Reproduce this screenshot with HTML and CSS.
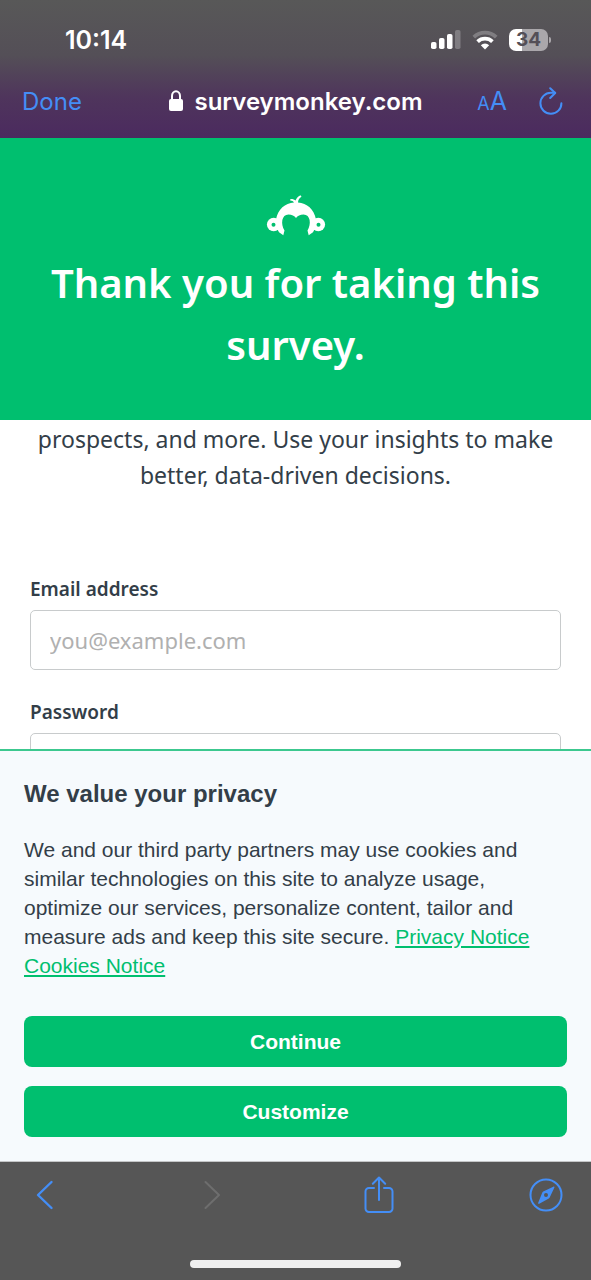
FILE: index.html
```
<!DOCTYPE html>
<html lang="en">
<head>
    <meta charset="utf-8">
    <meta name="viewport" content="width=device-width, initial-scale=1">
    <title>SurveyMonkey</title>
    <link rel="stylesheet" href="styles.css">
</head>
<body>
    <header class="browser-top">
        <div class="status-bar">
            <span class="clock">10:14</span>
            <div class="status-icons">
                <svg width="30" height="20" viewBox="0 0 30 20" fill="#fff">
                    <rect x="0" y="12" width="5.500" height="7" rx="1.800"/>
                    <rect x="8" y="8" width="5.500" height="11" rx="1.800"/>
                    <rect x="16" y="4" width="5.500" height="15" rx="1.800"/>
                    <rect x="24" y="0" width="5.500" height="19" rx="1.800" opacity=".25"/>
                </svg>
                <svg width="26" height="20" viewBox="0 0 26 20" fill="none" stroke="#fff" stroke-width="3.800">
                    <path d="M1.800 7.200a16.200 16.200 0 0 1 22.400 0" opacity=".25"/>
                    <path d="M5.600 11.600a10.800 10.800 0 0 1 14.800 0"/>
                    <path d="M13 19.400l-4.200-4.200a6 6 0 0 1 8.400 0z" fill="#fff" stroke="none"/>
                </svg>
                <div class="battery"><span class="battery-level">34</span></div>
            </div>
        </div>
        <nav class="address-bar">
            <button class="done">Done</button>
            <div class="address">
                <svg width="16" height="22" viewBox="0 0 16 22">
                    <rect x="1" y="9" width="14" height="12" rx="2" fill="#fff"/>
                    <path d="M4 10V6a4 4.800 0 0 1 8 0v4" fill="none" stroke="#fff" stroke-width="2"/>
                </svg>
                <span>surveymonkey.com</span>
            </div>
            <div class="address-tools">
                <button class="text-size" aria-label="Text size"><small>A</small><span>A</span></button>
                <button aria-label="Reload">
                    <svg width="26" height="28" viewBox="0 0 26 28" fill="none" stroke="#448ef6" stroke-width="2" stroke-linecap="round" stroke-linejoin="round">
                        <path d="M23.400 16.200A10.500 10.500 0 1 1 12.900 5.800h4.200"/>
                        <path d="M12.200 1.200l5 4.800-5 5"/>
                    </svg>
                </button>
            </div>
        </nav>
    </header>

    <main class="page">
        <section class="hero">
            <svg class="logo" width="60" height="42" viewBox="0 0 60 42">
                <g fill="#fff">
                    <circle cx="7.700" cy="30.500" r="6.800"/>
                    <circle cx="52.300" cy="30.500" r="6.800"/>
                </g>
                <path fill="#00bf6f" d="M15 28h30v14H15z"/>
                <path fill="#fff" d="M10 25.500C12 15.500 19 9 28 8.600c-.6-1.300-1.900-2-3.800-2.100l.2-1.600c2.400-.1 4.200.5 5.200 1.700.7-2.500 2.300-4.300 4.900-5.400l1 1.600c-2 1.100-3.300 3-3.500 5.800C41 9 48 15.500 50 25.500c.4 4.500-.5 8.800-3 12.800L42.700 41.200 41.500 36.500C45.500 30 44.500 20.400 37.500 20.400c-3.300 0-6 1.300-7.500 3.600-1.500-2.300-4.200-3.600-7.500-3.600-7 0-8 9.600-4 16.100L17.300 41.200 13 38.300C10.500 34.300 9.600 30 10 25.500z"/>
                <circle cx="7.500" cy="30.800" r="2" fill="#00bf6f"/>
                <circle cx="52.500" cy="30.800" r="2" fill="#00bf6f"/>
            </svg>
            <h1>Thank you for taking this survey.</h1>
        </section>
        <p class="intro">prospects, and more. Use your insights to make better, data-driven decisions.</p>
        <form class="signup">
            <label for="email">Email address</label>
            <input type="email" id="email" placeholder="you@example.com">
            <label for="password">Password</label>
            <input type="password" id="password">
        </form>
    </main>

    <section class="privacy">
        <h2>We value your privacy</h2>
        <p>We and our third party partners may use cookies and similar technologies on this site to analyze usage, optimize our services, personalize content, tailor and measure ads and keep this site secure. <a href="#">Privacy Notice</a> <a href="#">Cookies Notice</a></p>
        <button>Continue</button>
        <button>Customize</button>
    </section>

    <footer class="browser-bottom">
        <nav class="toolbar">
            <button aria-label="Back">
                <svg width="18" height="30" viewBox="0 0 18 30" fill="none" stroke="#448ef6" stroke-width="2.400" stroke-linecap="round" stroke-linejoin="round">
                    <path d="M15.500 2L2 15l13.500 13"/>
                </svg>
            </button>
            <button aria-label="Forward" disabled>
                <svg width="18" height="30" viewBox="0 0 18 30" fill="none" stroke="#6e6e6e" stroke-width="2" stroke-linecap="round" stroke-linejoin="round">
                    <path d="M2.500 2L16 15 2.500 28"/>
                </svg>
            </button>
            <button aria-label="Share">
                <svg width="30" height="38" viewBox="0 0 30 38" fill="none" stroke="#448ef6" stroke-width="2" stroke-linecap="round" stroke-linejoin="round">
                    <path d="M10 12H5a3.500 3.500 0 0 0-3.500 3.500v17A3.500 3.500 0 0 0 5 36h20a3.500 3.500 0 0 0 3.500-3.500v-17A3.500 3.500 0 0 0 25 12h-5"/>
                    <path d="M15 24V1.500M8.800 7.700L15 1.500l6.200 6.200"/>
                </svg>
            </button>
            <button aria-label="Open in Safari">
                <svg width="34" height="34" viewBox="0 0 34 34">
                    <circle cx="17" cy="17" r="15.500" fill="none" stroke="#448ef6" stroke-width="2"/>
                    <path fill="#448ef6" fill-rule="evenodd" d="M25.300 8.700c.3.300.2.600 0 1L20.800 19.200c-.2.400-.6.900-1 1.200l-9.500 5.300c-.9.500-1.600-.3-1-1.200L13.200 14.800c.2-.4.600-.9 1-1.200l10.100-4.900c.4-.2.700-.3 1 0zM17 15a2 2 0 1 0 0 4 2 2 0 0 0 0-4z"/>
                </svg>
            </button>
        </nav>
        <div class="home-indicator"></div>
    </footer>
</body>
</html>
```
FILE: styles.css
```
* {
    box-sizing: border-box;
}

body {
    display: flex;
    flex-direction: column;
    height: 100vh;
    margin: 0;
    background-color: #fff;
    color: #333e48;
    font-family: "Noto Sans", sans-serif;
}

h1, h2, p {
    margin: 0;
}

button {
    padding: 0;
    border: none;
    background: none;
    font-family: inherit;
    cursor: pointer;
}

svg {
    display: block;
}

/* Browser top */
.browser-top {
    flex: none;
    padding: 16px 22px 12px;
    background: linear-gradient(#585858, #544f57 40%, #4f355c 70%, #4b2a5f);
    color: #fff;
    font-family: Inter, sans-serif;
}

.status-bar {
    display: flex;
    justify-content: space-between;
    align-items: center;
    height: 48px;
    padding: 0 21px 0 43px;
}

.clock {
    font-size: 25px;
    font-weight: 600;
}

.status-icons {
    display: flex;
    align-items: center;
    gap: 11px;
}

.battery {
    position: relative;
    width: 39px;
    height: 22px;
    border-radius: 7px;
    background: linear-gradient(90deg, #fff 34%, #aaa7ab 34%);
    color: #544f57;
    font-size: 19px;
    font-weight: 700;
    line-height: 22px;
    text-align: center;
}

.battery::after {
    content: "";
    position: absolute;
    top: 8px;
    right: -3px;
    width: 2px;
    height: 6px;
    border-radius: 0 2px 2px 0;
    background-color: #aaa7ab;
}

.address-bar {
    display: grid;
    grid-template-columns: 1fr auto 1fr;
    align-items: center;
    height: 62px;
    padding-top: 12px;
}

.address-bar button {
    color: #448ef6;
}

.done {
    justify-self: start;
    font-size: 24px;
}

.address {
    display: flex;
    align-items: center;
    gap: 10px;
    font-size: 24px;
    font-weight: 600;
}

.address-tools {
    display: flex;
    justify-content: flex-end;
    align-items: center;
    gap: 31px;
    padding-right: 5px;
}

.text-size {
    display: flex;
    align-items: baseline;
    font-size: 25px;
}

.text-size small {
    font-size: 18px;
}

/* Page */
.page {
    flex: 1;
    min-height: 0;
    overflow: hidden;
}

.hero {
    padding: 56px 40px 44px;
    background-color: #00bf6f;
    color: #fff;
    text-align: center;
}

.logo {
    margin: 0 auto 16px;
}

.hero h1 {
    font-size: 40px;
    font-weight: 600;
    line-height: 62px;
}

.intro {
    padding: 1px 32px 0;
    font-size: 23px;
    line-height: 36px;
    text-align: center;
}

.signup {
    display: flex;
    flex-direction: column;
    padding: 82px 30px 0;
}

.signup label {
    margin-bottom: 7px;
    font-size: 19px;
    font-weight: 600;
    line-height: 28px;
}

.signup input {
    height: 60px;
    margin-bottom: 28px;
    padding: 0 19px;
    border: 1px solid #c8cbcc;
    border-radius: 5px;
    background-color: #fff;
    color: #333e48;
    font-family: inherit;
    font-size: 22px;
}

.signup input::placeholder {
    color: #b0b0b0;
}

/* Privacy */
.privacy {
    flex: none;
    display: flex;
    flex-direction: column;
    padding: 28px 24px 24px;
    border-top: 2px solid #3cc88f;
    border-bottom: 1px solid #c4c6c7;
    background-color: #f6fafd;
    font-family: "Liberation Sans", Arial, sans-serif;
}

.privacy h2 {
    margin-bottom: 26px;
    font-size: 24px;
    line-height: 30px;
}

.privacy p {
    margin-bottom: 36px;
    padding-right: 16px;
    font-size: 21px;
    line-height: 29px;
}

.privacy a {
    display: inline-block;
    color: #00bf6f;
}

.privacy button {
    height: 51px;
    border-radius: 8px;
    background-color: #00bf6f;
    color: #fff;
    font-size: 21px;
    font-weight: 700;
}

.privacy button + button {
    margin-top: 19px;
}

/* Browser bottom */
.browser-bottom {
    flex: none;
    padding: 14px 28px 12px;
    background-color: #565656;
}

.toolbar {
    display: flex;
    justify-content: space-between;
    align-items: center;
    height: 38px;
    margin-bottom: 46px;
}

.toolbar button {
    display: flex;
    justify-content: center;
    width: 34px;
}

.home-indicator {
    width: 211px;
    height: 8px;
    margin: 0 auto;
    border-radius: 4px;
    background-color: #efefef;
}
```
